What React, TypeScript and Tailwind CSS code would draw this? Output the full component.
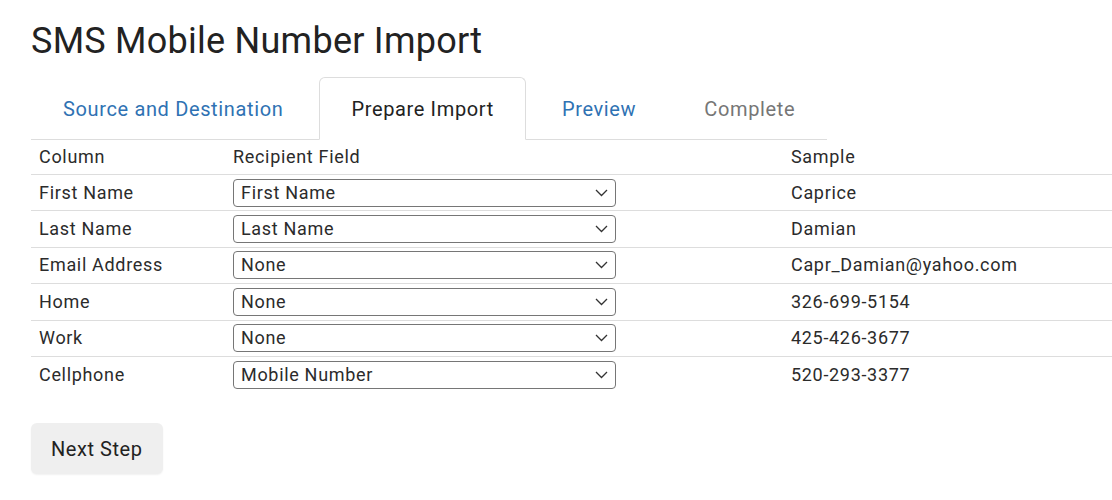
import React from 'react'

type Row = {
	column: string
	field: string
	sample: string
}

const rows: Row[] = [
	{ column: 'First Name', field: 'First Name', sample: 'Caprice' },
	{ column: 'Last Name', field: 'Last Name', sample: 'Damian' },
	{ column: 'Email Address', field: 'None', sample: 'Capr_Damian@yahoo.com' },
	{ column: 'Home', field: 'None', sample: '326-699-5154' },
	{ column: 'Work', field: 'None', sample: '425-426-3677' },
	{ column: 'Cellphone', field: 'Mobile Number', sample: '520-293-3377' }
]

const tabs = [
	{ text: 'Source and Destination', state: 'link' },
	{ text: 'Prepare Import', state: 'active' },
	{ text: 'Preview', state: 'link' },
	{ text: 'Complete', state: 'disabled' }
]

function FieldSelect({ value }: { value: string }) {
	return (
		<div className="flex items-center w-[383px] h-[28px] border border-[#767676] rounded-[4px] pl-[7px] pr-[6px] bg-white">
			<span className="flex-1 leading-none">{value}</span>
			<svg width="13" height="8" viewBox="0 0 13 8" className="mr-[1px]">
				<polyline points="1,1 6.5,6.5 12,1" fill="none" stroke="#333" strokeWidth="1.3" />
			</svg>
		</div>
	)
}

export default function App() {
	return (
		<div
			className="bg-white text-[#2b2b2b] pl-[31px] pt-[21px] pb-[26px] min-h-[500px]"
			style={{ fontFamily: 'Roboto, "Liberation Sans", sans-serif' }}
		>
			<h1 className="text-[36px] leading-[40px] tracking-[0.25px] text-[#222] font-normal">
				SMS Mobile Number Import
			</h1>

			<ul className="inline-flex mt-[16px] border-b border-[#ddd]">
				{tabs.map((tab) => {
					const active = tab.state == 'active'
					const color = active ? 'text-[#222]' : tab.state == 'link' ? 'text-[#2f72b3]' : 'text-[#767676]'
					return (
						<li
							key={tab.text}
							className={`mr-[4px] last:mr-0 -mb-[1px] h-[63px] flex items-center px-[31px] text-[20px] leading-[28px] tracking-[0.64px] rounded-t-[6px] border ${
								active ? 'border-[#ddd] border-b-white bg-white' : 'border-transparent'
							} ${color}`}
						>
							{tab.text}
						</li>
					)
				})}
			</ul>

			<div className="text-[18px] leading-[24px] tracking-[0.68px]">
				<div className="flex items-center h-[35px] border-b border-[#ddd]">
					<div className="w-[202px] pl-[8px]">Column</div>
					<div className="w-[558px]">Recipient Field</div>
					<div>Sample</div>
				</div>
				{rows.map((row, i) => (
					<div
						key={row.column}
						className={`flex items-center h-[36.4px] ${i < rows.length - 1 ? 'border-b border-[#ddd]' : ''}`}
					>
						<div className="w-[202px] pl-[8px]">{row.column}</div>
						<div className="w-[558px]">
							<FieldSelect value={row.field} />
						</div>
						<div>{row.sample}</div>
					</div>
				))}
			</div>

			<button className="mt-[30px] h-[51px] px-[20px] rounded-[6px] bg-[#efefef] text-[20px] tracking-[0.55px] text-[#222] shadow-[0_1px_2px_rgba(0,0,0,0.06)]">
				Next Step
			</button>
		</div>
	)
}
